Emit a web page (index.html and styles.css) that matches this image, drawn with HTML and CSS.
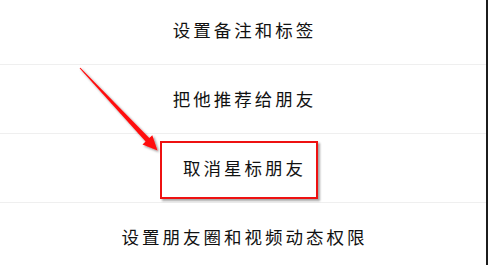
FILE: index.html
```html
<!DOCTYPE html>
<html lang="zh-CN">
<head>
<meta charset="utf-8">
<title>菜单</title>
<link rel="stylesheet" href="styles.css">
</head>
<body>
<div class="screen">
  <ul class="menu">
    <li class="menu-item"><span class="label">设置备注和标签</span></li>
    <li class="menu-item"><span class="label">把他推荐给朋友</span></li>
    <li class="menu-item is-highlighted"><span class="label">取消星标朋友</span><span class="highlight-box"></span></li>
    <li class="menu-item"><span class="label">设置朋友圈和视频动态权限</span></li>
  </ul>
  <svg class="arrow" width="488" height="265" viewBox="0 0 488 265" aria-hidden="true">
    <defs>
      <filter id="sh" x="-20%" y="-20%" width="140%" height="140%">
        <feDropShadow dx="1.5" dy="1.5" stdDeviation="1" flood-color="#000" flood-opacity="0.45"/>
      </filter>
    </defs>
    <polygon filter="url(#sh)" fill="#ff0a0a" points="80.4,67.7 149.3,138 152.3,135.2 157.5,150.5 142.5,144.4 145.6,141.6 79.6,68.3"/>
  </svg>
</div>
</body>
</html>
```

FILE: styles.css
```css
html, body {
  margin: 0;
  padding: 0;
  background: #ffffff;
}

.screen {
  position: relative;
  width: 486px;
  height: 265px;
  overflow: hidden;
  border-right: 2px solid #1c1c1c;
  background: #ffffff;
}

.menu {
  list-style: none;
  margin: -4px 0 0 0;
  padding: 0;
  display: flex;
  flex-direction: column;
}

.menu-item {
  position: relative;
  height: 68px;
  display: flex;
  align-items: center;
  justify-content: center;
  border-bottom: 1px solid #efefef;
}

.label {
  font-family: "Noto Sans CJK SC", "Noto Sans", sans-serif;
  font-size: 17.5px;
  font-weight: 400;
  color: #111111;
  letter-spacing: 3px;
  padding-left: 3px;
  line-height: 1;
}

.highlight-box {
  position: absolute;
  left: 160px;
  top: 7px;
  width: 154px;
  height: 54px;
  border: 2px solid #ee1111;
  box-shadow: 1.5px 1.5px 2px rgba(0, 0, 0, 0.35);
  pointer-events: none;
}

.arrow {
  position: absolute;
  left: 0;
  top: 0;
  pointer-events: none;
}
```
